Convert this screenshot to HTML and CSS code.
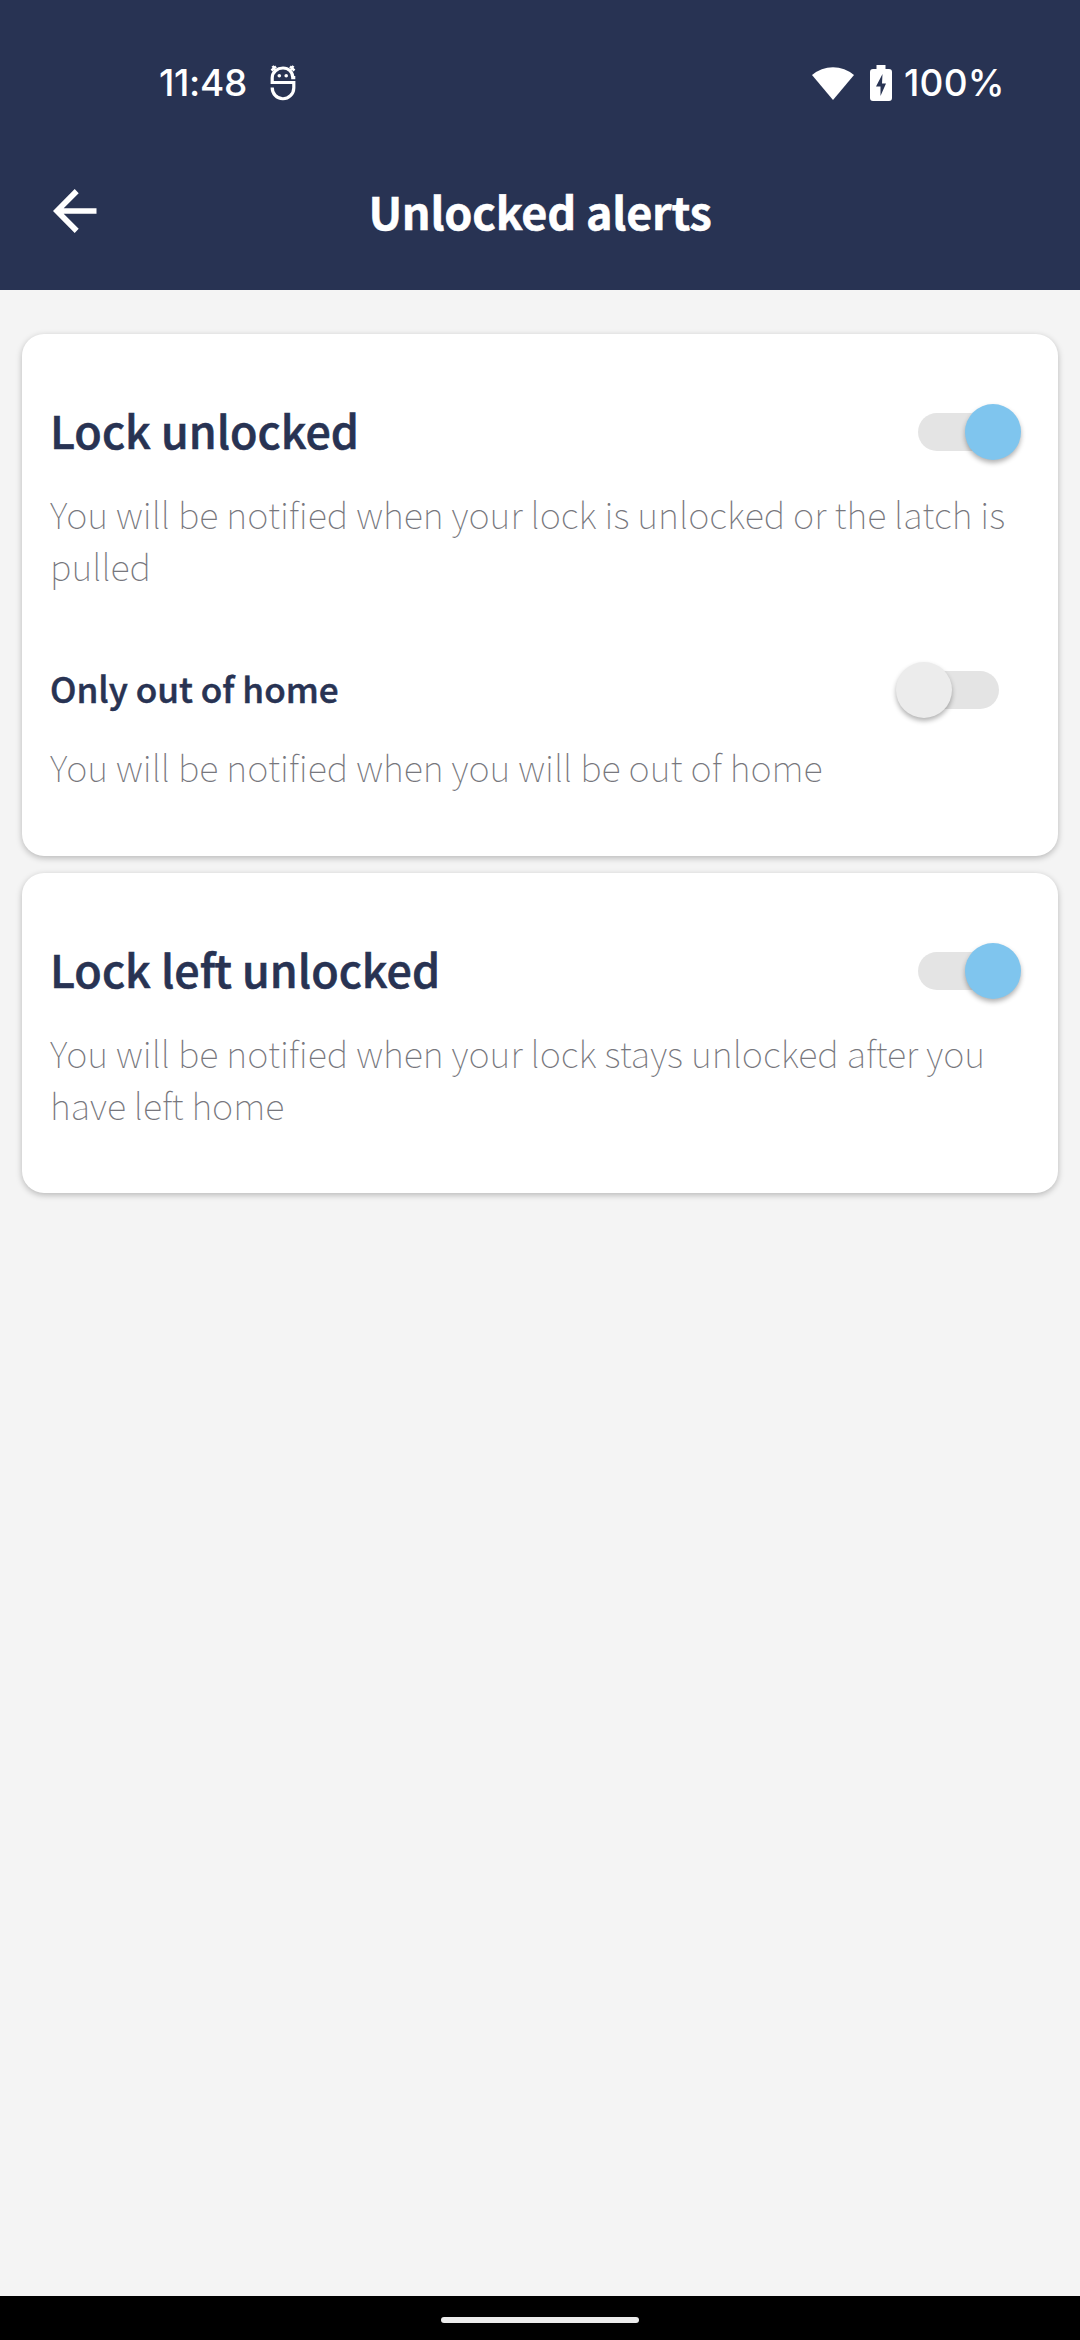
FILE: index.html
```html
<!DOCTYPE html>
<html lang="en">
<head>
<meta charset="utf-8">
<title>Unlocked alerts</title>
<link rel="stylesheet" href="styles.css">
</head>
<body>
<header class="top">
  <div class="status">
    <span class="clock">11:48</span>
    <svg class="bug" viewBox="0 0 26 36" width="26" height="36" fill="none" stroke="#fff" stroke-width="3.2"><path d="M25.300 12.700H22.800C22.800 7 18.500 3 13 3S2.200 7 2.200 12.700V17.500H23.800V23A10.800 11 0 0 1 2.200 22.500"/><path stroke-width="2.600" d="M6.500 5.500L2.500 1M1.500 5.500L6 1.500M19.500 5.500L23.500 1M20 1.500L24.500 5.500"/><circle cx="9.300" cy="10.700" r="1.800" fill="#fff" stroke="none"/><circle cx="16.200" cy="10.700" r="1.800" fill="#fff" stroke="none"/></svg>
    <span class="spacer"></span>
    <svg class="wifi" viewBox="0 0 42 34" width="42" height="34" fill="#fff"><path d="M21 34L0 9a32 32 0 0 1 42 0z"/></svg>
    <svg class="battery" viewBox="0 0 22 36" width="22" height="36"><path fill="#fff" d="M6.500 0h9v4H19a3 3 0 0 1 3 3v26a3 3 0 0 1-3 3H3a3 3 0 0 1-3-3V7a3 3 0 0 1 3-3h3.500z"/><path fill="#283353" d="M12.500 9L6 21.500h4.500V31L16 18.500h-4z"/></svg>
    <span class="percent">100%</span>
  </div>
  <div class="bar">
    <svg class="back" viewBox="0 0 44 44" width="44" height="44" fill="#fff"><path d="M43.500 19.300H10.700L25.700 4.200 21.700 0 0 22l21.700 22 4-4.200L10.700 24.700H43.500z"/></svg>
    <h1 class="title">Unlocked alerts</h1>
  </div>
</header>
<main class="content">
  <section class="card card-first">
    <div class="row"><h2 class="heading">Lock unlocked</h2><span class="switch on"><span class="thumb"></span></span></div>
    <p class="text">You will be notified when your lock is unlocked or the latch is pulled</p>
    <div class="row row-sub"><h3 class="subheading">Only out of home</h3><span class="switch"><span class="thumb"></span></span></div>
    <p class="text text-sub">You will be notified when you will be out of home</p>
  </section>
  <section class="card card-second">
    <div class="row"><h2 class="heading">Lock le<span class="tight">f</span>t unlocked</h2><span class="switch on"><span class="thumb"></span></span></div>
    <p class="text">You will be notified when your lock stays unlocked a<span class="tight">f</span>ter you have le<span class="tight">f</span>t home</p>
  </section>
</main>
<footer class="nav"><span class="handle"></span></footer>
</body>
</html>
```
FILE: styles.css
```css
* { box-sizing: border-box; margin: 0; padding: 0; }
body { display: flex; flex-direction: column; height: 2340px; background: #f4f4f4; font-family: "Noto Sans CJK SC", sans-serif; }
.top { height: 290px; background: #283353; color: #fff; }
.status { height: 132px; padding: 34px 77px 0 159px; display: flex; align-items: center; font: 500 37px "Inter", sans-serif; }
.clock { width: 88px; margin-top: -1px; white-space: nowrap; letter-spacing: -0.300px; }
.percent { width: 99px; margin-top: -1px; white-space: nowrap; letter-spacing: 0.200px; }
.bug { margin-left: 23px; }
.spacer { flex: 1; }
.battery { margin: 0 12px 0 16px; }
.bar { display: flex; align-items: center; height: 158px; padding-left: 53px; }
.title { flex: 1; text-align: center; margin-right: 97px; font-size: 45px; font-weight: 700; letter-spacing: -0.250px; margin-top: -1px; -webkit-text-stroke: 0.5px #fff; }
.content { flex: 1; padding: 44px 22px; display: flex; flex-direction: column; gap: 17px; }
.card { background: #fff; border-radius: 22px; padding: 58px 28px 0; box-shadow: 0 2px 6px rgba(0,0,0,.25); }
.card-first { height: 522px; }
.card-second { height: 320px; }
.row { display: flex; justify-content: space-between; align-items: center; height: 80px; }
.heading { font-size: 44.800px; font-weight: 500; color: #283353; margin-top: -5px; -webkit-text-stroke: 0.6px #283353; }
.subheading { font-size: 35.100px; font-weight: 500; color: #283353; margin-top: -5px; -webkit-text-stroke: 0.500px #283353; }
.text { font-size: 36.100px; line-height: 52px; font-weight: 100; color: #77777d; margin-top: 15px; }
.tight { letter-spacing: -0.02em; }
.row-sub { margin-top: 59px; }
.text-sub { margin-top: 10px; }
.switch { width: 103px; height: 56px; margin-right: 31px; display: flex; align-items: center; }
.switch::after { content: ""; width: 75px; height: 38px; margin-left: -28px; background: #e4e4e4; border-radius: 0 19px 19px 0; }
.thumb { flex: none; width: 56px; height: 56px; border-radius: 50%; background: #ececec; box-shadow: 0 3px 5px rgba(0,0,0,.3); z-index: 1; }
.on { flex-direction: row-reverse; margin-right: 9px; }
.on::after { margin: 0 -28px 0 0; border-radius: 19px 0 0 19px; }
.on .thumb { background: #7fc5ee; }
.nav { height: 44px; background: #000; display: flex; justify-content: center; align-items: center; padding-top: 4px; }
.handle { width: 198px; height: 6px; border-radius: 3px; background: #ececec; }
```
